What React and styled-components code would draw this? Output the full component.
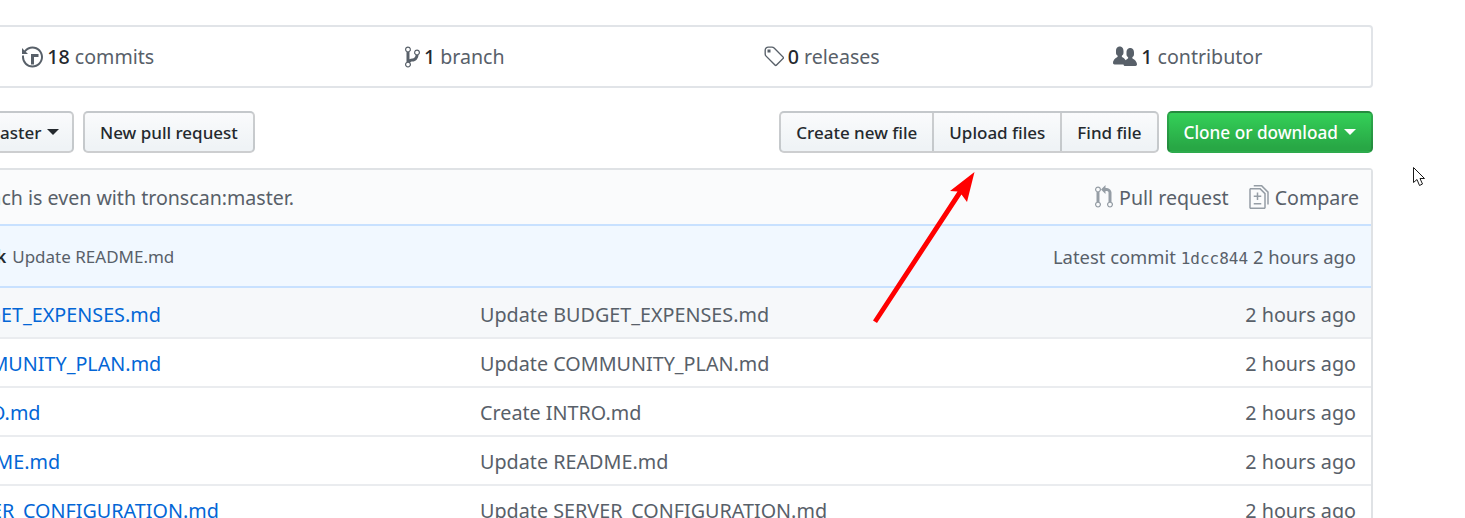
import styled, { createGlobalStyle } from "styled-components";

const GlobalStyle = createGlobalStyle`
  html, body {
    margin: 0;
    padding: 0;
    background: #fff;
    overflow: hidden;
  }
`;

const FONT = `"Noto Sans", "Open Sans", "Liberation Sans", sans-serif`;

const Page = styled.div`
  position: relative;
  width: 1465px;
  height: 518px;
  overflow: hidden;
  font-family: ${FONT};
  font-size: 19.6px;
  color: #24292e;
`;

// the repo page is wider than the shot, its left edge runs off the picture
const Content = styled.div`
  width: 1470px;
  margin-left: -97px;
  padding-top: 25px;
`;

const NumbersBar = styled.ul`
  display: grid;
  grid-template-columns: repeat(4, 1fr);
  height: 63px;
  box-sizing: border-box;
  margin: 0 0 23px;
  padding: 0;
  list-style: none;
  border: 2px solid #e1e4e8;
  border-radius: 4px;
`;

const NumberItem = styled.li`
  display: flex;
  align-items: center;
  justify-content: center;
  gap: 4px;
  color: #586069;
  white-space: nowrap;

  strong {
    font-weight: 500;
    color: #24292e;
  }

  svg {
    fill: #586069;
    display: block;
  }
`;

const ActionRow = styled.div`
  display: flex;
  justify-content: space-between;
  margin-bottom: 15px;
`;

const ActionGroup = styled.div`
  display: flex;
  gap: ${(p) => p.$gap || 0}px;
`;

const Button = styled.div`
  display: flex;
  align-items: center;
  gap: 6px;
  height: 42px;
  box-sizing: border-box;
  padding: 0 ${(p) => p.$pad || 15}px;
  border: 2px solid rgba(27, 31, 35, 0.2);
  border-radius: 5px;
  background: linear-gradient(#fafbfc, #eff3f6 90%);
  font-size: 17px;
  font-weight: 500;
  white-space: nowrap;
`;

const GroupButton = styled(Button)`
  border-radius: 0;
  margin-left: -2px;

  &:first-child {
    margin-left: 0;
    border-radius: 5px 0 0 5px;
  }

  &:last-child {
    border-radius: 0 5px 5px 0;
  }
`;

const CloneButton = styled(Button)`
  color: #fff;
  font-size: 17.2px;
  background: linear-gradient(#34d058, #28a745 90%);
`;

const Caret = styled.span`
  width: 0;
  height: 0;
  border-style: solid;
  border-width: 6px 6px 0;
  border-color: currentColor transparent transparent;
`;

const FileBox = styled.div`
  border: 2px solid #dfe2e5;
  border-bottom: 0;
  border-radius: 4px 4px 0 0;
`;

const BranchInfo = styled.div`
  display: flex;
  align-items: center;
  justify-content: space-between;
  height: 54px;
  box-sizing: border-box;
  padding: 0 12px 0 11px;
  background: #fafbfc;
  color: #586069;
`;

const BranchLinks = styled.div`
  display: flex;
  gap: 20px;
`;

const BranchLink = styled.span`
  display: flex;
  align-items: center;
  gap: 6px;

  svg {
    fill: #959da5;
    display: block;
  }
`;

const CommitRow = styled.div`
  display: flex;
  align-items: center;
  justify-content: space-between;
  height: 64px;
  box-sizing: border-box;
  padding: 0 15px 0 24px;
  background: #f1f8ff;
  border-top: 2px solid #c8e1ff;
  border-bottom: 2px solid #c8e1ff;
  color: #586069;
  font-size: 17px;
`;

const CommitAuthor = styled.span`
  font-weight: 600;
  color: #24292e;
  margin-right: 6px;
`;

const CommitMeta = styled.span`
  font-size: 18.4px;
`;

const Sha = styled.code`
  font-family: "DejaVu Sans Mono", "Liberation Mono", monospace;
  font-size: 16px;
`;

const FileRow = styled.div`
  display: grid;
  grid-template-columns: 535px 1fr auto;
  align-items: center;
  height: 49px;
  box-sizing: border-box;
  padding: ${(p) => (p.$first ? "4px" : "2px")} 15px 0 40px;
  border-top: ${(p) => (p.$first ? 0 : "2px solid #eaecef")};
  background: ${(p) => (p.$active ? "#f6f8fa" : "#fff")};
  color: #586069;
  font-size: 19.75px;
  white-space: nowrap;
`;

const FileName = styled.span`
  color: #0366d6;
`;

const Overlay = styled.svg`
  position: absolute;
  left: ${(p) => p.$x}px;
  top: ${(p) => p.$y}px;
`;

const HistoryIcon = () => (
  <svg width="21" height="24" viewBox="0 0 14 16">
    <path d="M8 13H6V6h5v2H8v5zM7 1C4.81 1 2.87 2.02 1.59 3.59L0 2v4h4L2.5 4.5C3.55 3.17 5.17 2.3 7 2.3c3.14 0 5.7 2.56 5.7 5.7s-2.56 5.7-5.7 5.7A5.71 5.71 0 0 1 1.3 8c0-.34.03-.67.09-1H.08C.03 7.33 0 7.66 0 8c0 3.86 3.14 7 7 7s7-3.14 7-7-3.14-7-7-7z" />
  </svg>
);

const BranchIcon = () => (
  <svg width="15" height="24" viewBox="0 0 10 16">
    <path d="M10 5c0-1.11-.89-2-2-2a1.993 1.993 0 0 0-1 3.72v.3c-.02.52-.23.98-.63 1.38-.4.4-.86.61-1.38.63-.83.02-1.48.16-2 .45V4.72a1.993 1.993 0 0 0-1-3.72C.88 1 0 1.89 0 3a2 2 0 0 0 1 1.72v6.56c-.59.35-1 .99-1 1.72 0 1.11.89 2 2 2 1.11 0 2-.89 2-2 0-.53-.2-1-.53-1.36.09-.06.48-.41.59-.47.25-.11.56-.17.94-.17 1.05-.05 1.95-.45 2.75-1.25S8.95 7.77 9 6.73h-.02C9.59 6.37 10 5.73 10 5zM2 1.8c.66 0 1.2.55 1.2 1.2 0 .65-.55 1.2-1.2 1.2C1.35 4.2.8 3.65.8 3c0-.65.55-1.2 1.2-1.2zm0 12.41c-.66 0-1.2-.55-1.2-1.2 0-.65.55-1.2 1.2-1.2.65 0 1.2.55 1.2 1.2 0 .65-.55 1.2-1.2 1.2zm6-8c-.66 0-1.2-.55-1.2-1.2 0-.65.55-1.2 1.2-1.2.65 0 1.2.55 1.2 1.2 0 .65-.55 1.2-1.2 1.2z" />
  </svg>
);

const TagIcon = () => (
  <svg width="21" height="24" viewBox="0 0 14 16">
    <path d="M7.73 1.73C7.26 1.26 6.62 1 5.96 1H3.5C2.13 1 1 2.13 1 3.5v2.47c0 .66.27 1.3.73 1.77l6.06 6.06c.39.39 1.02.39 1.41 0l4.59-4.59a.996.996 0 0 0 0-1.41L7.73 1.73zM2.38 7.09c-.31-.3-.47-.7-.47-1.13V3.5c0-.88.72-1.59 1.59-1.59h2.47c.42 0 .83.16 1.13.47l6.14 6.13-4.73 4.73-6.13-6.15zM3.01 3h2v2H3V3h.01z" />
  </svg>
);

const PeopleIcon = () => (
  <svg width="24" height="24" viewBox="0 0 16 16">
    <path d="M16 12.999c0 .439-.45 1-1 1H7.995c-.539 0-.994-.447-.995-.999H1c-.54 0-1-.561-1-1 0-2.634 3-4 3-4s.229-.409 0-1c-.841-.621-1.058-.59-1-3 .058-2.419 1.367-3 2.5-3s2.442.58 2.5 3c.058 2.41-.159 2.379-1 3-.229.59 0 1 0 1s1.549.711 2.42 2.088C9.196 9.369 10 8.999 10 8.999s.229-.409 0-1c-.841-.62-1.058-.59-1-3 .058-2.419 1.367-3 2.5-3s2.437.581 2.495 3c.059 2.41-.158 2.38-1 3-.229.59 0 1 0 1s3.005 1.366 3.005 4z" />
  </svg>
);

const PullRequestIcon = () => (
  <svg width="18" height="24" viewBox="0 0 12 16">
    <path d="M11 11.28V5c-.03-.78-.34-1.47-.94-2.06C9.46 2.35 8.78 2.03 8 2H7V0L4 3l3 3V4h1c.27.02.48.11.69.31.21.2.3.42.31.69v6.28A1.993 1.993 0 0 0 10 15a1.993 1.993 0 0 0 1-3.72zm-1 2.92c-.66 0-1.2-.55-1.2-1.2 0-.65.55-1.2 1.2-1.2.65 0 1.2.55 1.2 1.2 0 .65-.55 1.2-1.2 1.2zM4 3c0-1.11-.89-2-2-2a1.993 1.993 0 0 0-1 3.72v6.56A1.993 1.993 0 0 0 2 15a1.993 1.993 0 0 0 1-3.72V4.72c.59-.34 1-.98 1-1.72zm-.8 10c0 .66-.55 1.2-1.2 1.2-.65 0-1.2-.55-1.2-1.2 0-.65.55-1.2 1.2-1.2.65 0 1.2.55 1.2 1.2zM2 4.2C1.34 4.2.8 3.65.8 3c0-.65.55-1.2 1.2-1.2.65 0 1.2.55 1.2 1.2 0 .65-.55 1.2-1.2 1.2z" />
  </svg>
);

const DiffIcon = () => (
  <svg width="20" height="24" viewBox="0 0 13 16">
    <path d="M6 7h2v1H6v2H5V8H3V7h2V5h1v2zm-3 6h5v-1H3v1zM7.5 2L11 5.5V15c0 .55-.45 1-1 1H1c-.55 0-1-.45-1-1V3c0-.55.45-1 1-1h6.5zM10 6L7 3H1v12h9V6zM8.5 0H3v1h5l4 4v8h1V4.5L8.5 0z" />
  </svg>
);

const files = [
  { name: "BUDGET_EXPENSES.md", message: "Update BUDGET_EXPENSES.md" },
  { name: "COMMUNITY_PLAN.md", message: "Update COMMUNITY_PLAN.md" },
  { name: "INTRO.md", message: "Create INTRO.md" },
  { name: "README.md", message: "Update README.md" },
  { name: "SERVER_CONFIGURATION.md", message: "Update SERVER_CONFIGURATION.md" },
];

const App = () => {
  return (
    <Page>
      <GlobalStyle />
      <Content>
        <NumbersBar>
          <NumberItem>
            <HistoryIcon />
            <span><strong>18</strong> commits</span>
          </NumberItem>
          <NumberItem>
            <BranchIcon />
            <span><strong>1</strong> branch</span>
          </NumberItem>
          <NumberItem>
            <TagIcon />
            <span><strong>0</strong> releases</span>
          </NumberItem>
          <NumberItem>
            <PeopleIcon />
            <span><strong>1</strong> contributor</span>
          </NumberItem>
        </NumbersBar>

        <ActionRow>
          <ActionGroup $gap={9}>
            <Button $pad={12.5}>
              Branch: master <Caret />
            </Button>
            <Button>New pull request</Button>
          </ActionGroup>
          <ActionGroup $gap={8}>
            <ActionGroup>
              <GroupButton>Create new file</GroupButton>
              <GroupButton>Upload files</GroupButton>
              <GroupButton>Find file</GroupButton>
            </ActionGroup>
            <CloneButton>
              Clone or download <Caret />
            </CloneButton>
          </ActionGroup>
        </ActionRow>

        <FileBox>
          <BranchInfo>
            <span>This branch is even with tronscan:master.</span>
            <BranchLinks>
              <BranchLink><PullRequestIcon /> Pull request</BranchLink>
              <BranchLink><DiffIcon /> Compare</BranchLink>
            </BranchLinks>
          </BranchInfo>
          <CommitRow>
            <span>
              <CommitAuthor>blackjack</CommitAuthor>
              Update README.md
            </span>
            <CommitMeta>
              Latest commit <Sha>1dcc844</Sha> 2 hours ago
            </CommitMeta>
          </CommitRow>
          {files.map((file, i) => (
            <FileRow key={file.name} $first={i === 0} $active={i === 0}>
              <FileName>{file.name}</FileName>
              <span>{file.message}</span>
              <span>2 hours ago</span>
            </FileRow>
          ))}
        </FileBox>
      </Content>

      <Overlay $x={870} $y={168} width="110" height="160" viewBox="870 168 110 160">
        <path
          d="M974.5 172 L967 202 L961.5 194.5 L877 323 L873 320.5 L957.5 191.5 L950 191 Z"
          fill="#ff0000"
        />
      </Overlay>
      <Overlay $x={1412} $y={166} width="14" height="22" viewBox="0 0 14 22">
        <path
          d="M1.5 1.5 V16.5 L5 13.5 L7.5 19.5 L10.5 18 L8 12.5 H12.5 Z"
          fill="#fff"
          stroke="#1a1a1a"
          strokeWidth="1"
        />
      </Overlay>
    </Page>
  );
};

export default App;
